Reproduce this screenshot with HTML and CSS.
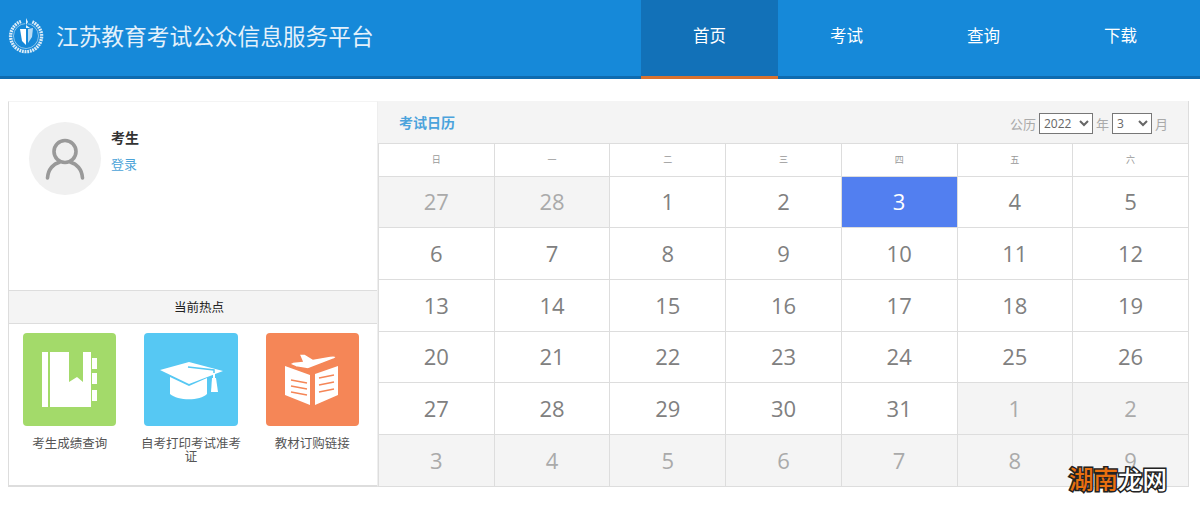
FILE: index.html
```html
<!DOCTYPE html>
<html lang="zh-CN">
<head>
    <meta charset="UTF-8">
    <title>江苏教育考试公众信息服务平台</title>
    <link rel="stylesheet" href="styles.css">
</head>
<body>
    <!-- Top Navigation Bar -->
    <div class="header">
        <div class="brand">
            <svg class="logo" width="36" height="38" viewBox="0 0 36 38">
                <path d="M13 4.500 A15.500 15.500 0 1 0 24 4.800" fill="none" stroke="#dcecf8" stroke-width="3.400" stroke-dasharray="1.800 .8"/>
                <circle cx="18" cy="19" r="12.500" fill="none" stroke="#8ec6ec" stroke-width="1"/>
                <path d="M18 1 L21 5 L19 8 L25 11 L26 20 L22 27 L19 31 L15 27 L11 20 L12 11 L17 8 Z" fill="#1689d9"/>
                <path d="M18 1 L20 5 L18 8 L22 11 L18 11 Z" fill="#e6f2fb"/>
                <path d="M12 12 L18 12 L18 28 L14 24 Z" fill="#fff"/>
                <path d="M20 12 L25 11 L24 20 L20 26 Z" fill="#b9dcf4"/>
            </svg>
            <span class="site-name">江苏教育考试公众信息服务平台</span>
        </div>
        <div class="navbar">
            <a class="active" href="#">首页</a>
            <a href="#">考试</a>
            <a href="#">查询</a>
            <a href="#">下载</a>
        </div>
    </div>

    <div class="main">
        <div class="side">
            <div class="user">
                <div class="avatar">
                    <svg width="40" height="44" viewBox="0 0 40 44">
                        <circle cx="20" cy="14.500" r="11" fill="none" stroke="#999" stroke-width="3.600"/>
                        <path d="M2.500 41 C3 32 9 26.500 14 25.500 M37.500 41 C37 32 31 26.500 26 25.500" fill="none" stroke="#999" stroke-width="3.600" stroke-linecap="round"/>
                    </svg>
                </div>
                <div class="user-info">
                    <div class="user-name">考生</div>
                    <a class="login" href="#">登录</a>
                </div>
            </div>
            <div class="hot-title">当前热点</div>
            <div class="hot-list">
                <a class="hot-item" href="#">
                    <div class="hot-icon green">
                        <svg width="93" height="93" viewBox="0 0 93 93" fill="#fff">
                            <rect x="19" y="19" width="6" height="55"/>
                            <path d="M27 19 H46 V49 L54 44 L60 49 V19 H68 V74 H27 Z"/>
                            <rect x="69" y="25" width="5" height="11"/>
                            <rect x="69" y="40" width="5" height="11"/>
                            <rect x="69" y="57" width="5" height="11"/>
                        </svg>
                    </div>
                    <div class="hot-name">考生成绩查询</div>
                </a>
                <a class="hot-item" href="#">
                    <div class="hot-icon blue">
                        <svg width="93" height="93" viewBox="0 0 93 93" fill="#fff">
                            <path d="M45 29 L79 38 L45 51 L16 37 Z"/>
                            <path d="M26 44 L45 53 L63 45 V61 C56 68 34 68 26 61 Z"/>
                            <path d="M44 34 L70 37 V46" fill="none" stroke="#56c8f3" stroke-width="1.500"/>
                            <rect x="69" y="40" width="2" height="6"/>
                            <path d="M68 45 H72 L74 59 H67 Z"/>
                        </svg>
                    </div>
                    <div class="hot-name">自考打印考试准考证</div>
                </a>
                <a class="hot-item" href="#">
                    <div class="hot-icon orange">
                        <svg width="93" height="93" viewBox="0 0 93 93">
                            <path d="M19 33 L44 42 V72 L19 62 Z M72 33 L49 41 V72 L72 62 Z" fill="#fff"/>
                            <path d="M33 21 L39 21 L47 26 L64 23 C70 22 72 24 68 26 L42 36 L30 34 L23 31 L27 29 L36 28 Z" fill="#fff" stroke="#f58657" stroke-width="1.500"/>
                            <path d="M25 47 L41 50 M25 53 L41 56 M25 59 L41 62 M68 42 L53 45 M68 49 L53 52 M68 56 L53 59" stroke="#f58657" stroke-width="1.500"/>
                        </svg>
                    </div>
                    <div class="hot-name">教材订购链接</div>
                </a>
            </div>
        </div>

        <div class="calendar">
            <div class="cal-head">
                <span class="cal-title">考试日历</span>
                <div class="cal-select">
                    <span>公历</span>
                    <select class="year"><option>2022</option></select>
                    <span>年</span>
                    <select class="month"><option>3</option></select>
                    <span>月</span>
                </div>
            </div>
            <table class="cal-table">
                <thead>
                    <tr><th>日</th><th>一</th><th>二</th><th>三</th><th>四</th><th>五</th><th>六</th></tr>
                </thead>
                <tbody>
                    <tr><td class="off">27</td><td class="off">28</td><td>1</td><td>2</td><td class="today">3</td><td>4</td><td>5</td></tr>
                    <tr><td>6</td><td>7</td><td>8</td><td>9</td><td>10</td><td>11</td><td>12</td></tr>
                    <tr><td>13</td><td>14</td><td>15</td><td>16</td><td>17</td><td>18</td><td>19</td></tr>
                    <tr><td>20</td><td>21</td><td>22</td><td>23</td><td>24</td><td>25</td><td>26</td></tr>
                    <tr><td>27</td><td>28</td><td>29</td><td>30</td><td>31</td><td class="off">1</td><td class="off">2</td></tr>
                    <tr><td class="off">3</td><td class="off">4</td><td class="off">5</td><td class="off">6</td><td class="off">7</td><td class="off">8</td><td class="off">9</td></tr>
                </tbody>
            </table>
        </div>
    </div>

    <div class="watermark"><span class="orange-text">湖南</span><span class="white-text">龙网</span></div>
</body>
</html>
```

FILE: styles.css
```css
body {
    font-family: "Open Sans", "Noto Sans CJK SC", sans-serif;
    margin: 0;
    height: 508px;
    overflow: hidden;
    position: relative;
    background-color: #fff;
}
a {
    text-decoration: none;
}
.header {
    display: flex;
    justify-content: space-between;
    height: 76px;
    background-color: #1689d9;
    border-bottom: 3px solid #0e6bb0;
}
.brand {
    display: flex;
    align-items: center;
    padding: 0 0 5px 8px;
}
.logo {
    margin-right: 12px;
}
.site-name {
    font-family: "Noto Sans CJK SC", sans-serif;
    font-size: 22.700px;
    color: #e4f1fb;
}
.navbar {
    display: flex;
    margin-right: 11px;
}
.navbar a {
    width: 137px;
    height: 76px;
    line-height: 71px;
    text-align: center;
    font-family: "Noto Sans CJK SC", sans-serif;
    font-size: 16.500px;
    color: #fff;
}
.navbar a.active {
    background-color: #1271b8;
    border-bottom: 3px solid #d9722f;
}
.main {
    display: flex;
    margin: 22px 11px 0 8px;
    height: 386px;
}
.side {
    width: 370px;
    box-sizing: border-box;
    display: flex;
    flex-direction: column;
    border-left: 1px solid #ddd;
    border-right: 1px solid #eee;
    border-bottom: 2px solid #ddd;
    border-top: 1px solid #f4f4f4;
}
.user {
    display: flex;
    height: 188px;
    padding: 20px 0 0 20px;
    box-sizing: border-box;
}
.avatar {
    width: 72px;
    height: 73px;
    border-radius: 50%;
    background-color: #f0f0f0;
    display: flex;
    justify-content: center;
    padding-top: 15px;
    box-sizing: border-box;
}
.user-info {
    margin-left: 10px;
    font-family: "Noto Sans CJK SC", sans-serif;
}
.user-name {
    font-size: 14px;
    font-weight: bold;
    color: #333;
    line-height: 20px;
    margin-top: 5px;
}
.login {
    display: block;
    font-size: 13px;
    color: #4ba3d8;
    line-height: 20px;
    margin-top: 7px;
}
.hot-title {
    height: 32px;
    line-height: 32px;
    padding-left: 12px;
    text-align: center;
    font-family: "Noto Sans CJK SC", sans-serif;
    font-size: 12.500px;
    color: #222;
    background-color: #f4f4f4;
    border-top: 1px solid #ddd;
    border-bottom: 1px solid #ddd;
}
.hot-list {
    display: flex;
    padding: 9px 0 0 0;
}
.hot-item {
    width: 121.300px;
    display: flex;
    flex-direction: column;
    align-items: center;
    padding: 0 14px;
    box-sizing: border-box;
}
.hot-icon {
    width: 93.300px;
    height: 93px;
    flex-shrink: 0;
    border-radius: 4px;
    display: flex;
    align-items: center;
    justify-content: center;
}
.green {
    background-color: #a3da6a;
}
.blue {
    background-color: #56c8f3;
}
.orange {
    background-color: #f58657;
}
.hot-name {
    width: 105px;
    margin-top: 10px;
    text-align: center;
    font-family: "Noto Sans CJK SC", sans-serif;
    font-size: 12.500px;
    line-height: 13px;
    color: #555;
}
.calendar {
    flex: 1;
    display: flex;
    flex-direction: column;
}
.cal-head {
    height: 42px;
    flex-shrink: 0;
    display: flex;
    justify-content: space-between;
    align-items: center;
    padding: 0 20px 0 21px;
    background-color: #f4f4f4;
    border-right: 1px solid #ddd;
}
.cal-title {
    font-family: "Noto Sans CJK SC", sans-serif;
    font-size: 14px;
    font-weight: bold;
    color: #4ba3dc;
}
.cal-select {
    display: flex;
    align-items: center;
    gap: 3px;
    margin-top: 2px;
    font-family: "Noto Sans CJK SC", sans-serif;
    font-size: 13px;
    color: #aaa;
}
.cal-select select {
    height: 21px;
    padding: 0;
    font-family: "Open Sans", sans-serif;
    font-size: 12px;
    color: #666;
    background-color: #fff;
    border: 1px solid #777;
    border-radius: 0;
}
.year {
    width: 54px;
}
.month {
    width: 40px;
}
.cal-table {
    width: 100%;
    table-layout: fixed;
    border-collapse: collapse;
    background-color: #fff;
}
.cal-table th, .cal-table td {
    border: 1px solid #ddd;
    padding: 0;
    text-align: center;
}
.cal-table th {
    height: 31.500px;
    font-family: "Noto Sans CJK SC", sans-serif;
    font-size: 9px;
    font-weight: normal;
    color: #999;
}
.cal-table td {
    height: 49.700px;
    padding-bottom: 1px;
    font-size: 22px;
    line-height: 30px;
    color: #808080;
}
.cal-table td.off {
    background-color: #f4f4f4;
    color: #aaa;
}
.cal-table td.today {
    background-color: #527ff0;
    color: #fff;
}
.watermark {
    position: absolute;
    left: 1069px;
    top: 464px;
    font-family: "Noto Sans CJK SC", sans-serif;
    font-size: 24.500px;
    font-weight: 500;
    line-height: 30px;
    paint-order: stroke fill;
    -webkit-text-stroke: 3px #222;
}
.orange-text {
    color: #e8700f;
}
.white-text {
    color: #fff;
}
```
